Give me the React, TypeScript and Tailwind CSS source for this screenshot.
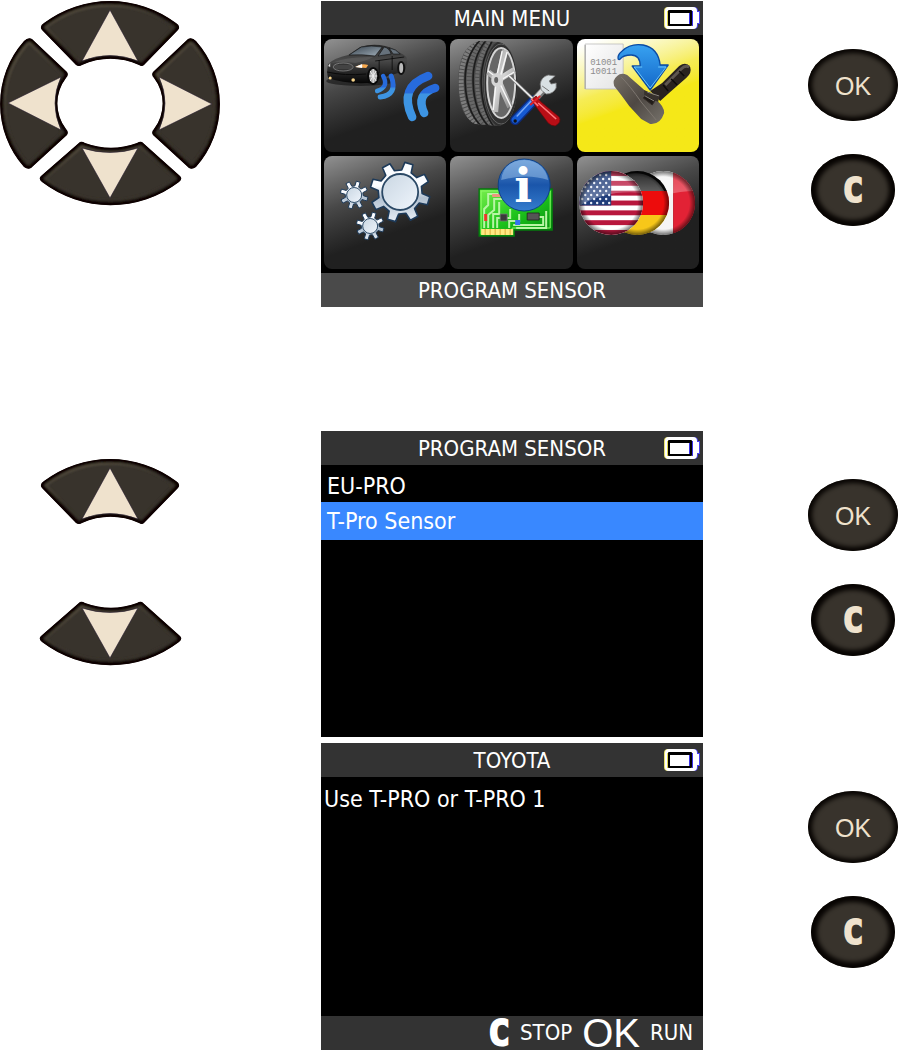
import React from "react";

type Direction = "up" | "down" | "left" | "right";

const ARROWS: Record<Direction, { width: number; height: number; body: string; arrow: string }> = {
  up: {
    width: 140,
    height: 66,
    body: "M4 22 A110 110 0 0 1 136 22 Q141 25 138 29 L104 64 Q102 66 99 64 A68 68 0 0 0 42 64 Q39 66 36 64 L2 29 Q-1 25 4 22Z",
    arrow: "M70 9 L98 60 Q70 49 42 60Z",
  },
  down: {
    width: 143,
    height: 65,
    body: "M41 1 Q43 0 46 2 A76 76 0 0 0 98 2 Q101 0 103 1 L141 35 Q144 38 140 41 A113 113 0 0 1 3 41 Q-1 38 2 35Z",
    arrow: "M43 7 Q71 16 99 7 L71 57Z",
  },
  left: {
    width: 68,
    height: 132,
    body: "M32 1 L67 34 Q69 37 66 40 A42 42 0 0 0 66 91 Q69 94 67 97 L31 130 Q28 132 24 129 A95 95 0 0 1 24 3 Q28 -1 32 1Z",
    arrow: "M8 65 L61 39 Q49 65 61 92Z",
  },
  right: {
    width: 68,
    height: 132,
    body: "M36 1 L1 34 Q-1 37 2 40 A42 42 0 0 1 2 91 Q-1 94 1 97 L37 130 Q40 132 44 129 A95 95 0 0 0 44 3 Q40 -1 36 1Z",
    arrow: "M60 66 L7 39 Q19 65 7 92Z",
  },
};

const ArrowKey: React.FC<{ direction: Direction; className?: string }> = ({ direction, className }) => {
  const { width, height, body, arrow } = ARROWS[direction];
  const id = React.useId();

  return (
    <button type="button" aria-label={direction} className={className}>
      <svg width={width} height={height} viewBox={`0 0 ${width} ${height}`} className="block">
        <defs>
          <clipPath id={`${id}c`}>
            <path d={body} />
          </clipPath>
          <linearGradient id={`${id}g`} x1="0" y1="0" x2="0.6" y2="1">
            <stop offset="0" stopColor="#6a614c" />
            <stop offset="0.6" stopColor="#38332c" />
          </linearGradient>
          <filter id={`${id}b`}>
            <feGaussianBlur stdDeviation="0.8" />
          </filter>
        </defs>
        <g clipPath={`url(#${id}c)`}>
          <path d={body} fill="#38332c" />
          <g filter={`url(#${id}b)`} fill="none">
            <path d={body} stroke={`url(#${id}g)`} strokeWidth="11" />
            <path d={body} stroke="#080503" strokeWidth="7" />
          </g>
        </g>
        <path d={arrow} fill="#efe2cd" stroke="#21182c" strokeWidth="0.6" />
      </svg>
    </button>
  );
};

const RoundKeys = () => (
  <div className="flex flex-col items-end pt-12">
    <div className="flex w-[90px] flex-col items-center gap-[33px]">
      <button
        type="button"
        className="flex h-[72px] w-[90px] items-center justify-center rounded-[50%] bg-[#38332c] pt-1 font-['Liberation_Sans',sans-serif] text-[25px] text-[#efe2cd] shadow-[inset_0_0_4px_4px_#080503]"
      >
        OK
      </button>
      <button
        type="button"
        className="flex h-[72px] w-[84px] items-center justify-center rounded-[50%] bg-[#38332c] font-['DejaVu_Sans_Mono',monospace] text-[34px] font-bold text-[#efe2cd] shadow-[inset_0_0_4px_6px_#080503] [-webkit-text-stroke:2px_#efe2cd]"
      >
        C
      </button>
    </div>
  </div>
);

const Battery = () => (
  <svg width="36" height="24" viewBox="0 0 36 24" className="absolute right-[3px] top-[5px]">
    <rect x="0" y="1" width="32" height="22" rx="4" fill="#e8e26a" />
    <rect x="3" y="1" width="31" height="22" rx="4" fill="#4a42e8" />
    <path d="M33 5h3v13h-3z" fill="#4a42e8" />
    <rect x="1" y="1" width="32" height="22" rx="4" fill="#fff" />
    <path d="M32 6h3v11h-3z" fill="#fff" />
    <rect x="3" y="5" width="2" height="15" fill="#e0d850" />
    <rect x="28" y="5" width="1" height="15" fill="#3a32e8" />
    <rect x="4" y="4" width="24" height="16" rx="1" fill="#000" />
    <rect x="25" y="7" width="1" height="11" fill="#3a32e8" />
    <rect x="6" y="7" width="19" height="11" fill="#fff" />
  </svg>
);

const ScreenHeader: React.FC<{ title: string }> = ({ title }) => (
  <header className="relative flex h-[34px] items-center justify-center bg-[#333333] pt-[2px]">
    <h2>{title}</h2>
    <Battery />
  </header>
);

const Screen: React.FC<{ title: string; children: React.ReactNode }> = ({ title, children }) => (
  <section className="flex min-h-[306px] flex-col bg-black font-['DejaVu_Sans_Condensed','DejaVu_Sans',sans-serif] text-[22px] leading-8 text-white">
    <ScreenHeader title={title} />
    {children}
  </section>
);

const Icon: React.FC<{ children: React.ReactNode }> = ({ children }) => (
  <svg viewBox="0 0 122 113" className="block h-full w-full">
    {children}
  </svg>
);

const CarIcon = () => (
  <Icon>
    <defs>
      <linearGradient id="car" x1="0" y1="0" x2="0" y2="1">
        <stop offset="0" stopColor="#292929" />
        <stop offset="0.4" stopColor="#4a4a4a" />
        <stop offset="1" stopColor="#050505" />
      </linearGradient>
      <linearGradient id="glass" x1="0" y1="0" x2="1" y2="1">
        <stop offset="0" stopColor="#35404a" />
        <stop offset="1" stopColor="#a0aeb9" />
      </linearGradient>
      <linearGradient id="wave" x1="0" y1="36" x2="0" y2="82" gradientUnits="userSpaceOnUse">
        <stop offset="0.38" stopColor="#276bdc" />
        <stop offset="0.42" stopColor="#3d94e2" />
      </linearGradient>
      <linearGradient id="waveSmall" x1="0" y1="36" x2="0" y2="59" gradientUnits="userSpaceOnUse">
        <stop offset="0.5" stopColor="#276bdc" />
        <stop offset="0.6" stopColor="#3d94e2" />
      </linearGradient>
    </defs>
    <ellipse cx="36" cy="42" rx="34" ry="5" fill="#111" opacity="0.6" />
    <path d="M4 25 Q10 19 24 16 L36 8 Q48 4 61 7 Q70 9 76 14 Q84 17 83 23 L81 31 Q79 35 74 34 L54 40 Q50 45 43 44 Q20 45 4 39 Q2 33 4 25Z" fill="url(#car)" />
    <path d="M25 16 L37 8 Q47 6 58 8 L51 17 Q38 15 25 16Z" fill="url(#glass)" stroke="#111" strokeWidth="0.6" />
    <path d="M54 17 L60 8 Q65 9 67 15Z M69 15 L65 9 Q72 10 76 15Z" fill="#66717b" stroke="#111" strokeWidth="0.6" />
    <path d="M6 24 Q25 17 49 18 Q42 22 31 24 Q18 22 6 24Z" fill="#666" opacity="0.5" />
    <path d="M55 21 L55 34 M68 17 L68 31 M51 22 L80 18" stroke="#090909" strokeWidth="0.8" />
    <ellipse cx="19" cy="28" rx="10" ry="4" fill="#333" stroke="#858585" strokeWidth="0.8" />
    <path d="M10 27h18M10 29h18" stroke="#777" strokeWidth="0.5" />
    <path d="M3 33 Q20 37 42 35" fill="none" stroke="#090909" />
    <path d="M31 28 Q37 24 44 26 L42 29Z" fill="#f8a94e" />
    <path d="M31 28 L38 25 L38 29Z" fill="#fff" />
    <path d="M4 27l2-3v4z" fill="#ddd" />
    <ellipse cx="49" cy="37" rx="6" ry="9" fill="#090909" />
    <ellipse cx="49" cy="37" rx="4" ry="7" fill="#aaa" />
    <path d="M49 30v14M45 37h8M46 32l6 10M52 32l-6 10" stroke="#eee" />
    <ellipse cx="77" cy="29" rx="4" ry="7" fill="#111" />
    <ellipse cx="77" cy="29" rx="2" ry="5" fill="#bbb" />
    <circle cx="6" cy="39" r="1.5" fill="#f7d48b" />
    <circle cx="29" cy="41" r="1.8" fill="#f7d48b" />
    <g fill="none" strokeLinecap="round">
      <path d="M59 37 Q65 48 53 52" stroke="url(#waveSmall)" strokeWidth="4.5" />
      <path d="M67 37 Q74 56 56 58" stroke="url(#waveSmall)" strokeWidth="5" />
      <path d="M104 37 Q74 48 88 78" stroke="url(#wave)" strokeWidth="8.5" />
      <path d="M111 49 Q91 55 100 74" stroke="url(#wave)" strokeWidth="8.5" />
    </g>
  </Icon>
);

const ServiceIcon = () => (
  <Icon>
    <defs>
      <linearGradient id="rim" x1="0" y1="0" x2="1" y2="1">
        <stop offset="0" stopColor="#888" />
        <stop offset="0.5" stopColor="#d5d5d5" />
        <stop offset="1" stopColor="#777" />
      </linearGradient>
      <clipPath id="tire">
        <path d="M29 2 Q8 8 8 43 Q8 77 25 85 L49 87 Q67 82 67 43 Q65 6 48 3Z" />
      </clipPath>
    </defs>
    <g clipPath="url(#tire)">
      <path d="M5 0h65v90H5z" fill="#4c4c4c" />
      <g fill="none">
        <path d="M27 0 Q10 17 11 44 Q11 72 28 88" stroke="#7d7d7d" strokeWidth="5" strokeDasharray="2.5 1" />
        <path d="M34 0 Q18 17 19 44 Q20 73 36 88" stroke="#686868" strokeWidth="5" strokeDasharray="2.5 1" />
        <path d="M41 0 Q26 20 27 45 Q28 73 43 88" stroke="#6c6c6c" strokeWidth="4" strokeDasharray="2.5 1" />
        <path d="M31 0 Q14 17 15 44 Q16 73 32 88 M37 0 Q22 17 23 44 Q24 73 39 88 M42 2 Q30 22 31 45 Q32 73 44 88" stroke="#1c1c1c" strokeWidth="1.6" />
      </g>
      <ellipse cx="51" cy="45" rx="18" ry="43" fill="#303030" />
      <ellipse cx="51" cy="45" rx="17" ry="40" fill="none" stroke="#777" strokeWidth="0.7" />
    </g>
    <ellipse cx="51" cy="44" rx="14" ry="35" fill="#666" stroke="#d5d5d5" strokeWidth="2" />
    <g stroke="url(#rim)" strokeWidth="6">
      <path d="M48 41 L55 11 M48 41 L64 31 M48 41 L60 68 M48 41 L45 73 M48 41 L38 33" />
    </g>
    <g stroke="#f7f7f7" strokeWidth="1.4">
      <path d="M46 40 L52 12 M50 38 L57 13 M49 42 L64 33 M49 43 L61 68 M46 43 L43 71 M47 39 L38 32" />
    </g>
    <ellipse cx="47" cy="41" rx="6" ry="7" fill="#d5d5d5" />
    <ellipse cx="46" cy="41" rx="2" ry="3" fill="#666" />
    <g strokeLinecap="round">
      <path d="M65 81 L84 61" stroke="#0c2b7c" strokeWidth="10" />
      <path d="M65 81 L84 61" stroke="#1559d2" strokeWidth="7" />
      <path d="M67 77 L81 62" stroke="#77a8f7" strokeWidth="1.5" />
      <circle cx="65" cy="82" r="1.7" fill="#111" />
      <path d="M84 61 L96 48" stroke="#777" strokeWidth="7" strokeLinecap="butt" />
      <path d="M84 60 L95 48" stroke="#ddd" strokeWidth="4" strokeLinecap="butt" />
    </g>
    <path d="M90 45 Q91 38 98 36 L105 37 L99 42 L101 45 L106 44 L106 49 Q103 55 96 55 L91 51Z" fill="#d9e0e3" stroke="#777" strokeWidth="0.8" />
    <path d="M92 47 L99 52" stroke="#777" />
    <path d="M59 37 L83 60" stroke="#777" strokeWidth="3" />
    <path d="M59 37 L83 60" stroke="#f3f3f3" strokeWidth="1.5" />
    <path d="M81 61 L86 57 L91 63 L109 78 Q112 83 105 87 Q101 87 98 84 L86 68Z" fill="#b80e16" stroke="#67090c" strokeWidth="0.7" />
    <path d="M88 64 L106 80 M81 60 L88 67" stroke="#ff777b" strokeWidth="1.6" />
    <path d="M80 66 L90 57" stroke="#df2227" strokeWidth="2" />
  </Icon>
);

const SensorIcon = () => (
  <Icon>
    <defs>
      <linearGradient id="paper" x1="0" y1="0" x2="1" y2="1">
        <stop stopColor="#fff" />
        <stop offset="1" stopColor="#e3e3e3" />
      </linearGradient>
      <linearGradient id="blueArrow" x1="0" y1="0" x2="0" y2="1">
        <stop stopColor="#38a2f1" />
        <stop offset="1" stopColor="#1266c8" />
      </linearGradient>
      <linearGradient id="rubber" x1="0" y1="0" x2="1" y2="1">
        <stop stopColor="#777068" />
        <stop offset="0.5" stopColor="#4e4843" />
        <stop offset="1" stopColor="#77736c" />
      </linearGradient>
    </defs>
    <path d="M8 5h38v45H8z" fill="url(#paper)" stroke="#bbb" strokeWidth="0.8" />
    <path d="M8 6v44" stroke="#aaa" strokeWidth="1.2" />
    <g fill="#8c8c8c" fontFamily="Liberation Mono, monospace" fontSize="9">
      <text x="13" y="26">01001</text>
      <text x="13" y="35">10011</text>
    </g>
    <path d="M73 52 L85 44 L102 27 Q109 22 113 28 Q115 34 109 39 L93 53 L83 62Z" fill="#29231f" />
    <path d="M88 46 L104 30 Q108 26 112 28" fill="none" stroke="#5d5650" strokeWidth="3" />
    <path d="M94 40l6 6M86 46l5 6M102 32l5 5" stroke="#0d0b0a" strokeWidth="1.5" />
    <path d="M40 37 Q44 33 50 36 L66 50 L73 57 L79 61 Q87 67 87 74 Q83 86 73 85 L64 80 L52 67 Q45 57 37 47 Q35 41 40 37Z" fill="url(#rubber)" />
    <path d="M44 38 Q53 47 64 63 L79 81" fill="none" stroke="#7d766f" strokeWidth="1" />
    <path d="M66 59l6-6 7 7-4 6z" stroke="#342d28" fill="#211c19" />
    <path d="M67 51l15 7-1 5-14-7z" fill="#37312d" />
    <path d="M70 53l12 4M68 57l9 5" stroke="#89847e" />
    <path d="M41 20 Q40 16 45 12 Q53 4 66 6 Q81 9 83 26 L91 26 L73 51 L55 27 L63 27 Q63 16 54 16 Q46 16 43 20 Q42 21 41 20Z" fill="url(#blueArrow)" stroke="#0b4ba3" strokeWidth="1.3" strokeLinejoin="round" />
    <path d="M57 28 H65 M81 28 H89 L73 49 L57 28" fill="none" stroke="#72cfff" strokeWidth="0.9" />
  </Icon>
);

function gearPath(cx: number, cy: number, outer: number, inner: number) {
  const points: string[] = [];
  for (let i = 0; i < 8; i++) {
    const angle = i * 45 - 73;
    [
      [-13, inner],
      [-8, outer],
      [8, outer],
      [13, inner],
    ].forEach(([delta, radius]) => {
      const rad = ((angle + delta) * Math.PI) / 180;
      points.push(`${cx + radius * Math.cos(rad)} ${cy + radius * Math.sin(rad)}`);
    });
  }
  return `M${points.join(" L")}Z`;
}

const SettingsIcon = () => (
  <Icon>
    <defs>
      <linearGradient id="gear" x1="0" y1="0" x2="0" y2="1">
        <stop offset="0.4" stopColor="#fafcff" />
        <stop offset="0.6" stopColor="#b2c1d1" />
        <stop offset="1" stopColor="#e8eef5" />
      </linearGradient>
      <linearGradient id="gearFace" x1="0" y1="0" x2="1" y2="1">
        <stop stopColor="#c9d6e2" />
        <stop offset="1" stopColor="#eff5fc" />
      </linearGradient>
    </defs>
    <g fill="url(#gear)" stroke="#1d3a59" strokeLinejoin="round">
      <path d={gearPath(76, 36, 30, 22)} strokeWidth="1.6" />
      <path d={gearPath(30, 39, 14, 9)} />
      <path d={gearPath(46, 70, 14, 9)} />
    </g>
    <g fill="url(#gearFace)" stroke="#2b4966">
      <circle cx="76" cy="36" r="18" strokeWidth="1.8" />
      <circle cx="30" cy="39" r="7.5" />
      <circle cx="46" cy="70" r="7.5" />
    </g>
  </Icon>
);

const InfoIcon = () => (
  <Icon>
    <defs>
      <linearGradient id="board" x1="0" y1="0" x2="1" y2="1">
        <stop stopColor="#79ef4d" />
        <stop offset="0.5" stopColor="#20c51d" />
        <stop offset="1" stopColor="#008b0e" />
      </linearGradient>
      <linearGradient id="info" x1="0" y1="0" x2="0" y2="1">
        <stop stopColor="#588fd1" />
        <stop offset="0.5" stopColor="#1a55aa" />
        <stop offset="1" stopColor="#347dce" />
      </linearGradient>
    </defs>
    <path d="M29 33h73v41H64v6H29z" fill="url(#board)" stroke="#047a0c" strokeWidth="1.4" />
    <path d="M31 35h69v37H62v6H31z" fill="none" stroke="#8dfa66" strokeWidth="1" />
    <g fill="none" stroke="#b8f5a4" strokeWidth="2">
      <path d="M34 72V53l4-4V38h10M38 72V59l6-5V43h8M43 72V58h6V46M47 72V62h13v-9M59 72v-7h10v-7M66 72h30V55M63 69h30v-8H83" />
    </g>
    <path d="M42 38h10v3H42z" fill="#ef967e" />
    <path d="M34 58h3v7h-3z" fill="#ec3527" />
    <path d="M50 58h7v7h-7z" fill="#3a3a3a" stroke="#777" strokeWidth="0.8" />
    <path d="M77 57h12v7H77z" fill="#555" stroke="#222" strokeWidth="0.8" />
    <path d="M65 64h5v5h-5z" fill="#3474ef" />
    <path d="M31 73h32v6H31z" fill="#ffe981" />
    <path d="M35 73v6M40 73v6M45 73v6M50 73v6M55 73v6M60 73v6" stroke="#dcae3c" />
    <circle cx="74" cy="29" r="26" fill="url(#info)" stroke="#0e4186" />
    <path d="M51 24 Q53 5 74 4 Q94 5 98 24 Q77 17 51 24Z" fill="#a9ccef" opacity="0.45" />
    <text x="73" y="46" textAnchor="middle" fill="#fff" fontFamily="DejaVu Serif, serif" fontWeight="bold" fontSize="47">
      i
    </text>
  </Icon>
);

const STRIPES = [0, 2, 4, 6, 8, 10, 12];

const LanguageIcon = () => (
  <Icon>
    <defs>
      <clipPath id="us">
        <circle cx="34" cy="47" r="32" />
      </clipPath>
      <clipPath id="de">
        <circle cx="60" cy="47" r="32" />
      </clipPath>
      <clipPath id="fr">
        <circle cx="86" cy="47" r="32" />
      </clipPath>
      <radialGradient id="ball" cx="0.5" cy="0.5" r="0.5">
        <stop offset="0.82" stopColor="#000" stopOpacity="0" />
        <stop offset="1" stopColor="#000" stopOpacity="0.55" />
      </radialGradient>
      <linearGradient id="shine" x1="0" y1="0" x2="0" y2="1">
        <stop stopColor="#fff" stopOpacity="0.15" />
        <stop offset="1" stopColor="#fff" stopOpacity="0.35" />
      </linearGradient>
    </defs>
    <g clipPath="url(#fr)">
      <path d="M54 15h42v64H54z" fill="#f5f5f5" />
      <path d="M96 15h22v64H96z" fill="#e22235" />
      <path d="M54 15h64v20Q88 35 60 51z" fill="url(#shine)" />
      <circle cx="86" cy="47" r="32" fill="url(#ball)" />
    </g>
    <g clipPath="url(#de)">
      <path d="M28 15h64v20H28z" fill="#080808" />
      <path d="M28 35h64v24H28z" fill="#ed0c0c" />
      <path d="M28 59h64v20H28z" fill="#f7c719" />
      <path d="M50 18Q75 14 87 35H54z" fill="url(#shine)" />
      <circle cx="60" cy="47" r="32" fill="url(#ball)" />
    </g>
    <g clipPath="url(#us)">
      <path d="M2 15h64v64H2z" fill="#fff" />
      {STRIPES.map((row) => (
        <rect key={row} x="2" y={15 + row * 4.92} width="64" height="4.92" fill="#b8173d" />
      ))}
      <path d="M2 15h32v34.5H2z" fill="#1f3c79" />
      <g fill="#e9eef8">
        {[0, 1, 2, 3, 4, 5, 6, 7].map((row) =>
          [0, 1, 2, 3, 4].map((col) => (
            <circle key={`${row}-${col}`} cx={5 + col * 6 + (row % 2) * 3} cy={19 + row * 4} r="1.2" />
          ))
        )}
      </g>
      <path d="M2 15h64v22Q30 33 2 50z" fill="url(#shine)" />
      <circle cx="34" cy="47" r="32" fill="url(#ball)" />
    </g>
  </Icon>
);

const TILES = [
  { name: "Check sensor", icon: CarIcon },
  { name: "Service", icon: ServiceIcon },
  { name: "Program sensor", icon: SensorIcon, selected: true },
  { name: "Settings", icon: SettingsIcon },
  { name: "Information", icon: InfoIcon },
  { name: "Language", icon: LanguageIcon },
];

const MainMenu = () => (
  <Screen title="MAIN MENU">
    <div className="grid grid-cols-3 gap-1 py-1 pr-1 pl-[3px]">
      {TILES.map(({ name, icon: TileIcon, selected }) => (
        <button
          key={name}
          type="button"
          aria-label={name}
          className={
            selected
              ? "h-[113px] overflow-hidden rounded-lg bg-linear-160 from-white from-5% via-[#f6ec55] via-40% to-[#f5e818] to-55%"
              : "h-[113px] overflow-hidden rounded-lg bg-linear-160 from-[#929292] from-0% via-[#484848] via-35% to-[#202020] to-65%"
          }
        >
          <TileIcon />
        </button>
      ))}
    </div>
    <footer className="h-[34px] bg-[#4a4a4a] pt-[2px] text-center">PROGRAM SENSOR</footer>
  </Screen>
);

const SensorList = () => (
  <Screen title="PROGRAM SENSOR">
    <ul className="text-[23px]">
      <li>
        <button type="button" className="flex h-[37px] w-full items-center px-[6px] pt-1">
          EU-PRO
        </button>
      </li>
      <li>
        <button type="button" className="flex h-[38px] w-full items-center bg-[#3988ff] px-[6px]">
          T-Pro Sensor
        </button>
      </li>
    </ul>
  </Screen>
);

const ToyotaScreen = () => (
  <Screen title="TOYOTA">
    <p className="min-h-[239px] flex-1 px-[3px] pt-[6px] text-[23px]">Use T-PRO or T-PRO 1</p>
    <footer className="flex h-[34px] items-center justify-end gap-[10px] bg-[#333333] pr-[10px]">
      <span className="font-['DejaVu_Sans_Mono',monospace] text-[36px] font-bold [-webkit-text-stroke:2px_white]">
        C
      </span>
      <span>STOP</span>
      <span className="font-['Liberation_Sans',sans-serif] text-[40px]">OK</span>
      <span>RUN</span>
    </footer>
  </Screen>
);

export default function App() {
  return (
    <main className="min-h-screen bg-white pt-px">
      <div className="grid grid-cols-[321fr_382px_195fr]">
        <div className="grid h-[205px] w-[220px]">
          <ArrowKey direction="up" className="col-start-1 row-start-1 self-start justify-self-center" />
          <ArrowKey direction="left" className="col-start-1 row-start-1 self-center justify-self-start" />
          <ArrowKey direction="right" className="col-start-1 row-start-1 self-center justify-self-end" />
          <ArrowKey direction="down" className="col-start-1 row-start-1 self-end justify-self-center" />
        </div>
        <MainMenu />
        <RoundKeys />
      </div>

      <div className="mt-[124px] grid grid-cols-[321fr_382px_195fr]">
        <div className="flex w-[220px] flex-col items-center gap-[76px] pt-7">
          <ArrowKey direction="up" />
          <ArrowKey direction="down" />
        </div>
        <SensorList />
        <RoundKeys />
      </div>

      <div className="mt-[6px] grid grid-cols-[321fr_382px_195fr]">
        <div />
        <ToyotaScreen />
        <RoundKeys />
      </div>
    </main>
  );
}
